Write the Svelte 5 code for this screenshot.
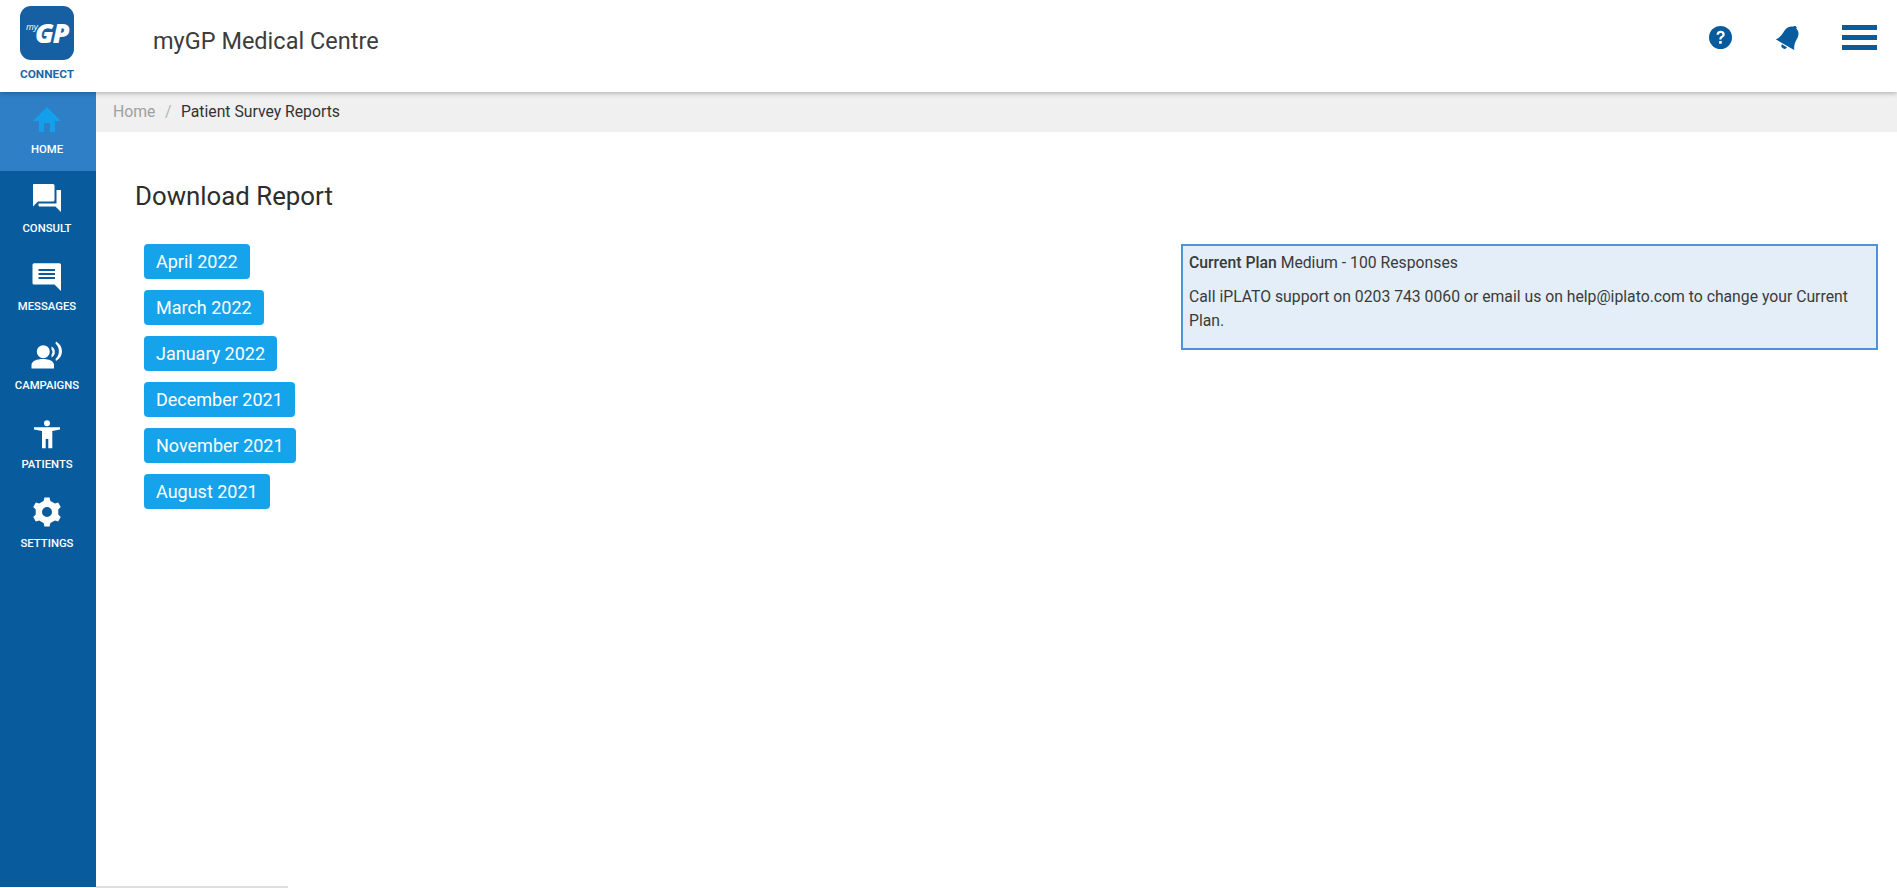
<script>
  const months = ['April 2022', 'March 2022', 'January 2022', 'December 2021', 'November 2021', 'August 2021'];

  function gear(cx, cy, R, r, hole) {
    const pt = (rad, deg) => {
      const a = (deg * Math.PI) / 180;
      return `${(cx + rad * Math.cos(a)).toFixed(2)} ${(cy + rad * Math.sin(a)).toFixed(2)}`;
    };
    let d = '';
    for (let i = 0; i < 6; i++) {
      const a = i * 60 - 90;
      d += `${i ? 'L' : 'M'}${pt(r, a - 17)} L${pt(R, a - 10)} L${pt(R, a + 10)} L${pt(r, a + 17)} `;
    }
    d += `Z M${cx - hole} ${cy} a${hole} ${hole} 0 1 0 ${hole * 2} 0 a${hole} ${hole} 0 1 0 ${-hole * 2} 0 Z`;
    return d;
  }

  const nav = [
    { label: 'HOME', active: true, d: 'M16 4 L30 18 H24 V29 H19 V20 H13 V29 H8 V18 H2 Z' },
    { label: 'CONSULT', d: 'M3 2 H22 a1.5 1.5 0 0 1 1.5 1.5 V18 a1.5 1.5 0 0 1 -1.5 1.5 H7 L2 24.5 V3 a1 1 0 0 1 1 -1 Z M25.5 8 H30 V30 L24.5 24.5 H8.5 a1 1 0 0 1 -1 -1 V21.5 H25.5 Z' },
    { label: 'MESSAGES', d: 'M3 2.3 H28.5 a1.5 1.5 0 0 1 1.5 1.5 V30 L23.5 23.5 H3 a1.5 1.5 0 0 1 -1.5 -1.5 V3.8 A1.5 1.5 0 0 1 3 2.3 Z M7.5 8 V10 H24 V8 Z M7.5 12 V14 H24 V12 Z M7.5 16 V18 H24 V16 Z', evenodd: true },
    { label: 'CAMPAIGNS', d: 'M12.3 6.2 a6.5 6.5 0 1 1 0 13 a6.5 6.5 0 0 1 0 -13 Z M.5 29.5 V26 C.5 22 6 20 12 20 C18 20 23 22 23 26 V29.5 Z M20.5 7.5 C25 9.5 25 16.5 20.5 18.5 V15.5 C21.8 14 21.8 12 20.5 10.5 Z M25 2.5 C33 7 33 17.5 25 22 L24.5 20 C29 16 29 8.5 24.5 4.5 Z' },
    { label: 'PATIENTS', d: 'M16 2.3 a3 3 0 1 1 0 6 a3 3 0 0 1 0 -6 Z M3 9.3 H29 V11.5 L21.3 13 V30.3 H17.3 V21 H14.7 V30.3 H11 V13 L3 11.5 Z' },
    { label: 'SETTINGS', d: gear(16, 15, 14.6, 11.6, 5), evenodd: true }
  ];
</script>

<div class="page">
  <header class="topbar">
    <div class="brand">
      <div class="logo"><span class="my">my</span><span class="gp">GP</span></div>
      <div class="connect">CONNECT</div>
    </div>
    <div class="practice">myGP Medical Centre</div>
    <div class="actions">
      <svg class="help" viewBox="0 0 24 24" aria-hidden="true">
        <circle cx="12" cy="12" r="12" fill="#085c9e" />
        <path d="M7.8 9.2 C7.9 6.4 9.8 5 12.2 5 C14.8 5 16.4 6.6 16.4 8.6 C16.4 10.4 15.4 11.2 14.2 12 C13.3 12.6 13.1 13 13.1 14.2 H10.8 C10.8 12.4 11.2 11.6 12.4 10.8 C13.4 10.1 14 9.6 14 8.8 C14 7.8 13.2 7.2 12.2 7.2 C11 7.2 10.3 8 10.2 9.2 Z M10.6 15.6 H13.3 V18.4 H10.6 Z" fill="#fff" />
      </svg>
      <svg class="bell" viewBox="0 0 24 24" aria-hidden="true">
        <g transform="translate(9 18.7) rotate(30)" fill="#085c9e">
          <path d="M-1.8 -19.6 a1.8 1.8 0 1 1 3.6 0 C6 -18.8 7.5 -14.5 7.5 -10.5 C7.5 -6 8.5 -3 10.7 0 H-10.7 C-8.5 -3 -7.5 -6 -7.5 -10.5 C-7.5 -14.5 -6 -18.8 -1.8 -19.6 Z" />
          <path d="M-3 1.2 H3 a3 3 0 0 1 -6 0 Z" />
        </g>
      </svg>
      <div class="burger"><span></span><span></span><span></span></div>
    </div>
  </header>

  <div class="body">
    <nav class="sidebar">
      {#each nav as item}
        <div class="nav-item" class:active={item.active}>
          <svg class="nav-icon" viewBox="0 0 32 32" aria-hidden="true">
            <path d={item.d} fill-rule={item.evenodd ? 'evenodd' : 'nonzero'} />
          </svg>
          <span class="nav-label">{item.label}</span>
        </div>
      {/each}
    </nav>

    <main class="content">
      <div class="crumbs">
        <span class="home">Home</span><span class="sep">/</span><span class="current">Patient Survey Reports</span>
      </div>
      <h1>Download Report</h1>
      <div class="columns">
        <div class="buttons">
          {#each months as m}
            <button type="button">{m}</button>
          {/each}
        </div>
        <aside class="plan">
          <p><strong>Current Plan</strong> Medium - 100 Responses</p>
          <p>Call iPLATO support on 0203 743 0060 or email us on help@iplato.com to change your Current Plan.</p>
        </aside>
      </div>
    </main>
  </div>
  <div class="scrollbar"></div>
</div>

<style>
  :global(body) { margin: 0; background: #fff; overflow: hidden; }
  .page {
    position: relative;
    height: 888px;
    display: flex;
    flex-direction: column;
    font-family: Roboto, "Liberation Sans", sans-serif;
    color: #333;
    overflow: hidden;
  }
  .topbar {
    height: 92px;
    flex: none;
    display: flex;
    align-items: flex-start;
    background: #fff;
    box-shadow: 0 1px 5px rgba(0,0,0,.3);
    position: relative;
    z-index: 2;
  }
  .brand { width: 94px; padding-top: 6px; display: flex; flex-direction: column; align-items: center; }
  .logo {
    width: 54px; height: 54px;
    border-radius: 11px;
    background: #155fa2;
    position: relative;
    color: #fff;
    font-style: italic;
    font-weight: 800;
    font-family: "Open Sans", sans-serif;
  }
  .my { position: absolute; left: 6px; top: 17px; font-size: 9px; font-weight: 400; line-height: 8px; }
  .gp { position: absolute; left: 15px; top: 14px; font-size: 27px; letter-spacing: -1px; line-height: 26px; }
  .connect { margin-top: 7px; font-size: 11.8px; font-weight: 700; color: #1a68a8; line-height: 15px; }
  .practice { margin-left: 59px; margin-top: 27px; font-size: 23.5px; line-height: 28px; color: #3c3c3c; }
  .actions { margin-left: auto; display: flex; align-items: flex-start; padding-right: 20px; padding-top: 25px; }
  .help { width: 23px; height: 23px; margin-top: 1px; }
  .bell { width: 24px; height: 24px; margin-left: 44px; margin-top: 1px; }
  .burger { width: 35px; margin-left: 42px; display: flex; flex-direction: column; gap: 5.5px; }
  .burger span { height: 4.5px; background: #085c9e; display: block; }

  .body { flex: 1; display: flex; min-height: 0; }
  .sidebar { width: 96px; flex: none; background: #085c9e; display: flex; flex-direction: column; margin-bottom: 1px; }
  .nav-item {
    height: 78.8px;
    flex: none;
    display: flex;
    flex-direction: column;
    align-items: center;
    padding: 11px 2px 0 0;
    box-sizing: border-box;
    color: #fff;
    fill: #fff;
  }
  .nav-item.active { background: #2f7fc6; fill: #149fec; }
  .nav-icon { width: 32px; height: 32px; display: block; flex: none; }
  .nav-label { margin-top: 7.8px; font-size: 11.3px; font-weight: 500; line-height: 13px; }

  .content { flex: 1; min-width: 0; }
  .crumbs {
    height: 40px;
    background: #f0f0f0;
    display: flex;
    align-items: center;
    padding: 0 0 2px 17px;
    font-size: 15.75px;
    box-sizing: border-box;
  }
  .home { color: #a0a0a0; }
  .sep { color: #b5b5b5; margin: 0 9.5px; }
  .current { color: #333; }
  h1 {
    margin: 0;
    padding: 49px 0 0 39px;
    font-size: 25.8px;
    font-weight: 400;
    line-height: 30px;
    color: #2d2d2d;
  }
  .columns { display: flex; margin-top: 33px; padding-left: 48px; }
  .buttons { display: flex; flex-direction: column; align-items: flex-start; gap: 11.1px; width: 1037px; flex: none; }
  button {
    height: 35px;
    padding: 0 12px;
    border: 0;
    border-radius: 4px;
    background: #15a3ec;
    color: #fff;
    font-family: inherit;
    font-size: 18px;
    line-height: 35px;
  }
  .plan {
    width: 697px;
    flex: none;
    height: 106px;
    box-sizing: border-box;
    border: 2px solid #4f92dc;
    background: #e3eef9;
    padding: 5px 6px;
    font-size: 15.75px;
    line-height: 24px;
    color: #3a3a3a;
  }
  .plan p { margin: 0 0 10px; }
  .plan strong { font-weight: 500; }
  .scrollbar {
    position: absolute;
    left: 96px; bottom: 0;
    width: 192px; height: 2px;
    background: #dedede;
  }
</style>
